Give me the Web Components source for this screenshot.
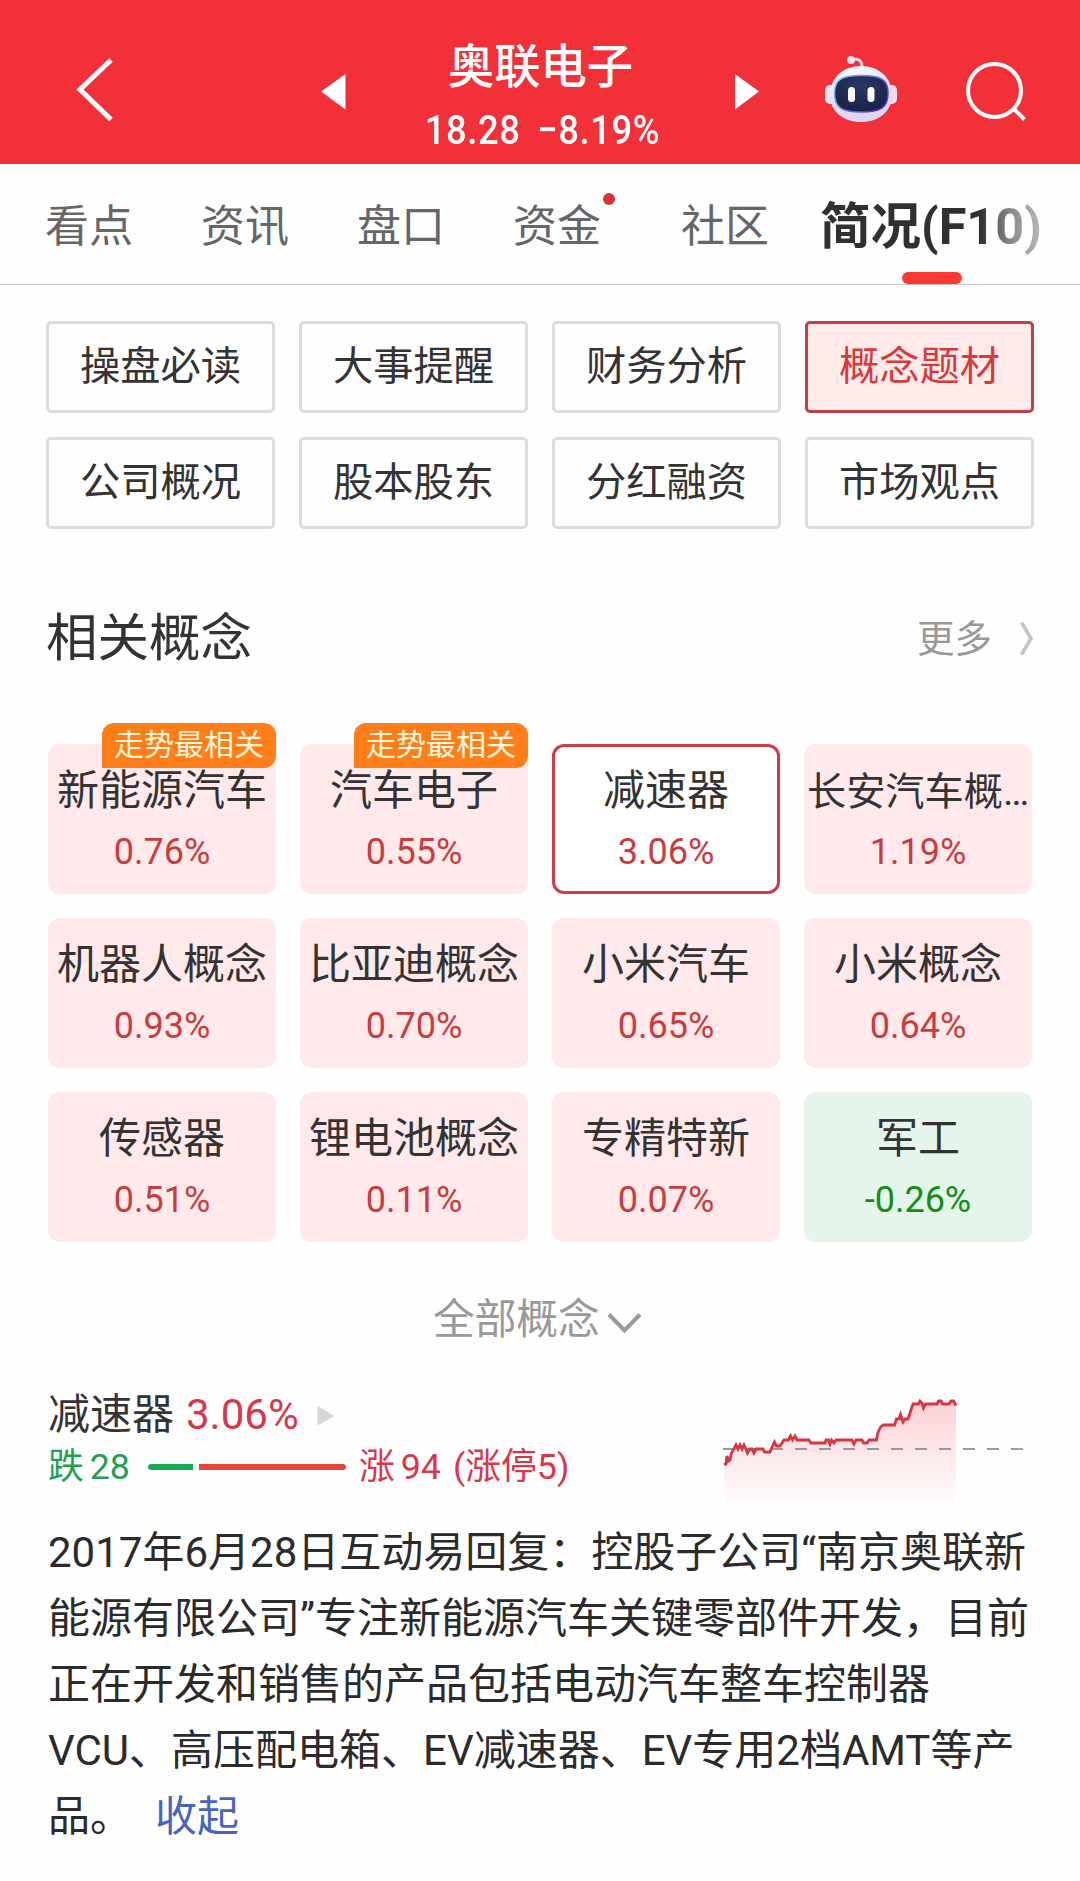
<!DOCTYPE html>
<html lang="zh-CN">
<head>
<meta charset="utf-8">
<title>奥联电子</title>
<style>
  body {
    margin: 0;
    width: 1080px;
    background: #fefefe;
    color: #333;
    font-family: Roboto, "Noto Sans CJK SC", sans-serif;
  }
</style>
</head>
<body>
<stock-page></stock-page>

<script>
class StockHeader extends HTMLElement {
  constructor() {
    super();

    const shadowRoot = this.attachShadow({mode: 'open'});

    shadowRoot.innerHTML = `
      <style>
        :host {
          display: grid;
          grid-template-columns: 321px 25px 389px 25px 65px 72px 69px 1fr;
          height: 164px;
          background: #f23038;
          color: #fff;
        }

        svg {
          display: block;
        }

        .title {
          display: flex;
          flex-direction: column;
          align-items: center;
          padding-top: 37px;
        }

        .name {
          font-size: 46.3px;
          font-weight: 500;
          line-height: 60px;
        }

        .quote {
          margin-left: 3px;
          font-size: 41.5px;
          font-weight: 500;
          letter-spacing: .7px;
          word-spacing: 8px;
          line-height: 65px;
          white-space: pre;
          transform: scaleX(.875);
        }
      </style>

      <svg width="321" height="164" fill="none" stroke="#fff" stroke-width="5"><path d="M111 60 80 89.5 111 119.5"/></svg>
      <svg width="25" height="164" fill="#fff"><path d="M0 91.5 24.5 74V109.500Z"/></svg>
      <div class="title">
        <div class="name"><slot name="name"></slot></div>
        <div class="quote"><slot name="quote"></slot></div>
      </div>
      <svg width="25" height="164" fill="#fff"><path d="M24 91.500 0 74V109.500Z"/></svg>
      <span></span>
      <svg width="72" height="164" viewBox="0 0 72 164">
        <defs>
          <linearGradient id="shell" x1="0" y1="0" x2="0.3" y2="1">
            <stop offset="0" stop-color="#fff"/>
            <stop offset=".55" stop-color="#e6e2f8"/>
            <stop offset="1" stop-color="#dcd6f6"/>
          </linearGradient>
          <linearGradient id="rim" x1="0" y1="0" x2="1" y2=".6">
            <stop offset="0" stop-color="#8fd0f2"/>
            <stop offset="1" stop-color="#5a2bd0"/>
          </linearGradient>
          <radialGradient id="face" cx=".5" cy=".3" r=".8">
            <stop offset="0" stop-color="#2b3966"/>
            <stop offset="1" stop-color="#161e42"/>
          </radialGradient>
        </defs>
        <path d="M26 60q11-3 11 7" fill="none" stroke="#f8d5e4" stroke-width="3"/>
        <circle cx="26" cy="60" r="4" fill="#fbe6f0"/>
        <rect x="0" y="85" width="12" height="19" rx="5" fill="#e8e6fa"/>
        <rect x="60" y="85" width="12" height="19" rx="5" fill="#f3d9ea"/>
        <path d="M36 66C53 66 67 77 67 95 67 112 53 122 36 122 19 122 5 112 5 95 5 77 19 66 36 66Z" fill="url(#shell)"/>
        <path d="M36 75.500C55 75.500 63 79 63 93 63 108 55 112 36 112 17 112 9.500 108 9.500 93 9.500 79 17 75.500 36 75.500Z" fill="url(#face)" stroke="url(#rim)" stroke-width="1.500"/>
        <rect x="23" y="87" width="7" height="15" rx="3.500" fill="#fff"/>
        <rect x="42.500" y="87" width="7" height="15" rx="3.500" fill="#fff"/>
      </svg>
      <span></span>
      <svg width="114" height="164" fill="none" stroke="#fff" stroke-width="4"><circle cx="28.500" cy="90.500" r="26.500"/><path d="M47 108 58.500 119.500"/></svg>
    `;
  }
}

class TabItem extends HTMLElement {
  constructor() {
    super();

    const shadowRoot = this.attachShadow({mode: 'open'});

    shadowRoot.innerHTML = `
      <style>
        :host {
          display: block;
          position: relative;
          margin-left: 68px;
          font-size: 44px;
          line-height: 116px;
          color: #666;
          white-space: nowrap;
        }

        :host(:first-child) {
          margin-left: 45px;
        }

        :host([wide]) {
          margin-left: 80px;
        }

        :host([dot])::after {
          content: '';
          position: absolute;
          top: 24px;
          right: -14px;
          width: 12px;
          height: 12px;
          border-radius: 50%;
          background: #dc3032;
        }

        :host([active]) {
          margin-left: 51px;
          font-size: 50.500px;
          font-weight: 700;
          color: transparent;
        }

        :host([active]) .label {
          background: linear-gradient(90deg, #303030 160px, #888 190px, #bbb 222px);
          -webkit-background-clip: text;
          background-clip: text;
        }

        :host([active])::after {
          content: '';
          position: absolute;
          left: 82px;
          top: 103px;
          width: 60px;
          height: 12px;
          border-radius: 6px;
          background: #fa3a32;
        }
      </style>

      <span class="label"><slot></slot></span>
    `;
  }
}

class TabBar extends HTMLElement {
  constructor() {
    super();

    const shadowRoot = this.attachShadow({mode: 'open'});

    shadowRoot.innerHTML = `
      <style>
        :host {
          display: flex;
          box-sizing: border-box;
          height: 121px;
          padding-top: 5px;
          border-bottom: 1px solid #c6c6c6;
        }
      </style>

      <slot></slot>
    `;
  }
}

class MenuButton extends HTMLElement {
  constructor() {
    super();

    const shadowRoot = this.attachShadow({mode: 'open'});

    shadowRoot.innerHTML = `
      <style>
        :host {
          display: block;
          box-sizing: border-box;
          height: 92px;
          border: 3px solid #dcdcdc;
          border-radius: 5px;
          font-size: 40.300px;
          line-height: 85px;
          text-align: center;
        }

        :host([active]) {
          border-color: #c04044;
          background: #ffeaea;
          color: #d8393b;
        }
      </style>

      <slot></slot>
    `;
  }
}

class ConceptCard extends HTMLElement {
  constructor() {
    super();

    const shadowRoot = this.attachShadow({mode: 'open'});

    shadowRoot.innerHTML = `
      <style>
        :host {
          display: block;
          position: relative;
          box-sizing: border-box;
          height: 150px;
          padding-top: 14px;
          border: 3px solid transparent;
          border-radius: 12px;
          background: #ffe9eb border-box;
          text-align: center;
          white-space: nowrap;
        }

        .name {
          font-size: 42px;
          line-height: 60px;
        }

        :host([long]) .name {
          font-size: 39.200px;
          line-height: 62px;
          height: 60px;
        }

        .rate {
          font-size: 36px;
          line-height: 62px;
          color: #c93c3e;
        }

        :host([selected]) {
          border-color: #cb3c4c;
          background: #fff;
        }

        :host([down]) {
          background: #e5f5eb border-box;
        }

        :host([down]) .rate {
          color: #0f8f14;
        }

        .badge {
          display: none;
          position: absolute;
          top: -24px;
          right: -3px;
          width: 174px;
          height: 45px;
          border-radius: 12px 12px 12px 0;
          background: #ff7e1a;
          color: #fff6dc;
          font-size: 30px;
          line-height: 43px;
        }

        :host([hot]) .badge {
          display: block;
        }
      </style>

      <div class="badge">走势最相关</div>
      <div class="name"><slot></slot></div>
      <div class="rate"></div>
    `;
  }

  connectedCallback() {
    this.shadowRoot.querySelector('.rate').textContent = this.getAttribute('rate');
  }
}

class SectionHead extends HTMLElement {
  constructor() {
    super();

    const shadowRoot = this.attachShadow({mode: 'open'});

    shadowRoot.innerHTML = `
      <style>
        :host {
          display: flex;
          align-items: center;
          box-sizing: border-box;
          height: 215px;
          padding: 4px 46px 0;
          font-size: 51.500px;
          line-height: 60px;
        }

        .more {
          margin-left: auto;
          margin-right: 28px;
          font-size: 37.500px;
          color: #999;
        }

        svg {
          display: block;
        }
      </style>

      <span><slot></slot></span>
      <span class="more">更多</span>
      <svg width="14" height="36" fill="none" stroke="#c4c4c4" stroke-width="3.500"><path d="M1.500 1.500 11 17.500 1.500 33.500"/></svg>
    `;
  }
}

class CardGrid extends HTMLElement {
  constructor() {
    super();

    const shadowRoot = this.attachShadow({mode: 'open'});

    shadowRoot.innerHTML = `
      <style>
        :host {
          display: grid;
          grid-template-columns: repeat(4, var(--col));
          gap: 24px;
        }
      </style>

      <slot></slot>
    `;
  }
}

class TrendLine extends HTMLElement {
  constructor() {
    super();

    const line = 'M24 84.500 26 84 27 76 28.500 81 30 80 31.500 73 34 69 36 65 38 69 40 65 42 69 44 65 46 69 47.500 73 50 69 52 69 54 73 56 69H63L64.500 72H70L72 67 74.500 62 76.500 66H80L84 60H88.500L90.500 56 92.500 60 95 56 97 60H109L111 63H125L126 60H128.500L130 64 131.500 60 134 63 136 60H152L154 64 156 60H162L163.500 63H167L169 60H176.500Q178 48 183 45H194.500L196.500 39H199L200.500 34.500 203 42 205 39H208L213 24H218.500L220 21 222 23 223.500 28 225.500 24H237L238.500 21H241L242.500 24H249L251 21H253.500L256 25.500';
    const shadowRoot = this.attachShadow({mode: 'open'});

    shadowRoot.innerHTML = `
      <style>
        :host {
          display: block;
          width: 360px;
          height: 140px;
        }
      </style>

      <svg width="360" height="140" fill="none">
        <linearGradient id="fade" gradientUnits="userSpaceOnUse" x1="0" y1="20" x2="0" y2="127">
          <stop offset="0" stop-color="#f8283c" stop-opacity=".22"/>
          <stop offset=".55" stop-color="#f8283c" stop-opacity=".09"/>
          <stop offset="1" stop-color="#f8283c" stop-opacity="0"/>
        </linearGradient>
        <path d="${line}V127H23.500Z" fill="url(#fade)"/>
        <path d="M23 69H323" stroke="#999" stroke-width="1.800" stroke-dasharray="12 12"/>
        <path d="${line}" stroke="#d93442" stroke-width="2.800"/>
      </svg>
    `;
  }
}

class ConceptSummary extends HTMLElement {
  constructor() {
    super();

    const shadowRoot = this.attachShadow({mode: 'open'});

    shadowRoot.innerHTML = `
      <style>
        :host {
          display: flex;
          justify-content: space-between;
          height: 140px;
          padding: 0 20px 0 48px;
          white-space: nowrap;
        }

        .row {
          display: flex;
          align-items: center;
          height: 70px;
          font-size: 42px;
          line-height: 70px;
        }

        .up {
          color: #d9364a;
        }

        .counts {
          height: 34px;
          font-size: 35.800px;
          line-height: 34px;
          word-spacing: -3px;
        }

        .down {
          width: 100px;
          color: #1fa052;
        }

        .bar {
          height: 6px;
          border-radius: 3px 0 0 3px;
          background: #14ad55;
          width: 45px;
        }

        .bar.rise {
          width: 147px;
          margin: 0 13px 0 6px;
          border-radius: 0 3px 3px 0;
          background: #e94238;
        }

        svg {
          margin-left: 18px;
        }
      </style>

      <div>
        <div class="row">
          <span>减速器</span>
          <span class="up" style="margin-left: 12px">3.06%</span>
          <svg width="18" height="20" fill="#d6d6d6" stroke="#d6d6d6" stroke-width="2" stroke-linejoin="round"><path d="M1.500 2.500 15.500 11 1.500 19Z"/></svg>
        </div>
        <div class="row counts">
          <span class="down">跌 28</span>
          <span class="bar"></span>
          <span class="bar rise"></span>
          <span class="up">涨 94</span>
          <span class="up" style="margin-left: 12px">(涨停5)</span>
        </div>
      </div>
      <trend-line></trend-line>
    `;
  }
}

class StockPage extends HTMLElement {
  constructor() {
    super();

    const shadowRoot = this.attachShadow({mode: 'open'});

    shadowRoot.innerHTML = `
      <style>
        :host {
          display: block;
          height: 1881px;
          overflow: hidden;
        }

        .menu {
          --col: 229px;
          margin: 36px 0 0 46px;
        }

        .concepts {
          --col: 228px;
          margin-left: 48px;
        }

        .all {
          display: flex;
          align-items: center;
          height: 60px;
          margin: 48px 0 30px 433px;
          font-size: 41.700px;
          line-height: 60px;
          color: #999;
        }

        .all svg {
          margin: 6px 0 0 7px;
        }

        p {
          margin: 0 0 0 48px;
          font-size: 42px;
          line-height: 66px;
          color: #2b2b2b;
          white-space: nowrap;
        }

        .fold {
          margin-left: 23px;
          color: #4865bd;
        }
      </style>

      <stock-header>
        <span slot="name">奥联电子</span>
        <span slot="quote">18.28 −8.19%</span>
      </stock-header>

      <tab-bar>
        <tab-item>看点</tab-item>
        <tab-item>资讯</tab-item>
        <tab-item>盘口</tab-item>
        <tab-item dot>资金</tab-item>
        <tab-item wide>社区</tab-item>
        <tab-item active>简况(F10)</tab-item>
      </tab-bar>

      <card-grid class="menu">
        <menu-button>操盘必读</menu-button>
        <menu-button>大事提醒</menu-button>
        <menu-button>财务分析</menu-button>
        <menu-button active>概念题材</menu-button>
        <menu-button>公司概况</menu-button>
        <menu-button>股本股东</menu-button>
        <menu-button>分红融资</menu-button>
        <menu-button>市场观点</menu-button>
      </card-grid>

      <section-head>相关概念</section-head>

      <card-grid class="concepts">
        <concept-card rate="0.76%" hot>新能源汽车</concept-card>
        <concept-card rate="0.55%" hot>汽车电子</concept-card>
        <concept-card rate="3.06%" selected>减速器</concept-card>
        <concept-card rate="1.19%" long>长安汽车概…</concept-card>
        <concept-card rate="0.93%">机器人概念</concept-card>
        <concept-card rate="0.70%">比亚迪概念</concept-card>
        <concept-card rate="0.65%">小米汽车</concept-card>
        <concept-card rate="0.64%">小米概念</concept-card>
        <concept-card rate="0.51%">传感器</concept-card>
        <concept-card rate="0.11%">锂电池概念</concept-card>
        <concept-card rate="0.07%">专精特新</concept-card>
        <concept-card rate="-0.26%" down>军工</concept-card>
      </card-grid>

      <div class="all">
        全部概念
        <svg width="36" height="22" fill="none" stroke="#999" stroke-width="4"><path d="M2 2.500 17.500 18.500 33 2.500"/></svg>
      </div>

      <concept-summary></concept-summary>

      <p>2017年6月28日互动易回复：控股子公司“南京奥联新<br>能源有限公司”专注新能源汽车关键零部件开发，目前<br>正在开发和销售的产品包括电动汽车整车控制器<br>VCU、高压配电箱、EV减速器、EV专用2档AMT等产<br>品。<span class="fold">收起</span></p>
    `;
  }
}

customElements.define('stock-header', StockHeader);
customElements.define('tab-item', TabItem);
customElements.define('tab-bar', TabBar);
customElements.define('menu-button', MenuButton);
customElements.define('concept-card', ConceptCard);
customElements.define('section-head', SectionHead);
customElements.define('card-grid', CardGrid);
customElements.define('trend-line', TrendLine);
customElements.define('concept-summary', ConceptSummary);
customElements.define('stock-page', StockPage);
</script>
</body>
</html>
